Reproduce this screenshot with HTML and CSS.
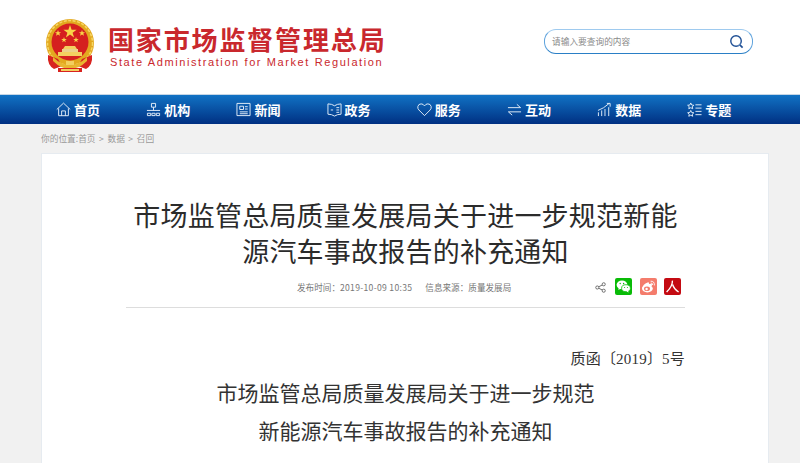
FILE: index.html
```html
<!DOCTYPE html>
<html lang="zh-CN">
<head>
  <meta charset="UTF-8" />
  <meta name="viewport" content="width=device-width, initial-scale=1.0"/>
  <title>市场监管总局质量发展局关于进一步规范新能源汽车事故报告的补充通知</title>
  <link rel="stylesheet" href="styles.css">
</head>
<body>

  <!-- Header -->
  <header class="header">
    <div class="logo">
      <svg class="emblem" viewBox="0 0 52 54" width="52" height="54">
        <circle cx="26" cy="24" r="24" fill="#e3a81f"/>
        <circle cx="26" cy="24" r="22.5" fill="none" stroke="#f6d765" stroke-width="1.5" stroke-dasharray="3 1.5"/>
        <circle cx="26" cy="23" r="18.5" fill="#d5201f"/>
        <path d="M4 36 Q3 46 10 50 L18 47 L14 40 Z" fill="#d8231f"/>
        <path d="M48 36 Q49 46 42 50 L34 47 L38 40 Z" fill="#d8231f"/>
        <path d="M9 38 Q17 46 26 46 Q35 46 43 38 L43 42 Q35 50 26 50 Q17 50 9 42 Z" fill="#e9b530"/>
        <path d="M14 49 H38 V53 H14 Z" fill="#d8231f"/>
        <path d="M17 50 H35 V52 H17 Z" fill="#f3cf60"/>
        <path d="M22 42 H30 V46 H22 Z" fill="#f3cf60"/>
        <polygon points="26,6 27.6,10.8 32.6,10.8 28.6,13.7 30.1,18.5 26,15.6 21.9,18.5 23.4,13.7 19.4,10.8 24.4,10.8" fill="#f8d648"/>
        <polygon points="14,11 14.8,13.2 17.1,13.2 15.3,14.6 16,16.8 14,15.5 12,16.8 12.7,14.6 10.9,13.2 13.2,13.2" fill="#f8d648"/>
        <polygon points="38,11 38.8,13.2 41.1,13.2 39.3,14.6 40,16.8 38,15.5 36,16.8 36.7,14.6 34.9,13.2 37.2,13.2" fill="#f8d648"/>
        <polygon points="20,18 20.7,20 22.8,20 21.1,21.2 21.8,23.2 20,22 18.2,23.2 18.9,21.2 17.2,20 19.3,20" fill="#f8d648"/>
        <polygon points="32,18 32.7,20 34.8,20 33.1,21.2 33.8,23.2 32,22 30.2,23.2 30.9,21.2 29.2,20 31.3,20" fill="#f8d648"/>
        <path d="M21 27 H31 L33 30 H19 Z" fill="#f3cf60"/>
        <path d="M18 30 H34 V33 H18 Z" fill="#ecd08a"/>
        <path d="M14 33 H38 V37 H14 Z" fill="#f3cf60"/>
      </svg>
      <div class="logo-text">
        <div class="logo-cn">国家市场监督管理总局</div>
        <div class="logo-en">State Administration for Market Regulation</div>
      </div>
    </div>
    <div class="search">
      <span class="search-text">请输入要查询的内容</span>
      <svg viewBox="0 0 16 16" width="15" height="15">
        <circle cx="7.5" cy="7.5" r="5.6" fill="none" stroke="#1f4f94" stroke-width="1.5"/>
        <path d="M10 13 L13 10" stroke="#9ec3ea" stroke-width="1"/>
        <path d="M11.6 11.6 L14.5 14.5" stroke="#1f4f94" stroke-width="1.8"/>
      </svg>
    </div>
  </header>

  <!-- Nav -->
  <nav class="nav">
    <a href="#">
      <svg viewBox="0 0 16 16" width="15" height="15"><path d="M.8 8 L8 1.2 L15.2 8 M2.8 6.8 V14.6 H13.2 V6.8 M6 14.6 V9.5 H10 V14.6" /></svg>
      首页
    </a>
    <a href="#">
      <svg viewBox="0 0 16 16" width="15" height="15"><path d="M5.8 1.5 H10.2 V5.5 H5.8 Z M1 9 H15 M8 5.5 V9 M1.5 12 H5 V14.5 H1.5 Z M6.3 12 H9.7 V14.5 H6.3 Z M11 12 H14.5 V14.5 H11 Z" /></svg>
      机构
    </a>
    <a href="#">
      <svg viewBox="0 0 16 16" width="15" height="15"><path d="M1 1.5 H15 V14.5 H1 Z M4 4.5 H8 V8 H4 Z M9.5 5 H12.5 M9.5 7.5 H12.5 M4 10.5 H12.5 M4 12.5 H12.5" /></svg>
      新闻
    </a>
    <a href="#">
      <svg viewBox="0 0 16 16" width="15" height="15"><path d="M1 2 Q5 2 8 4 Q11 2 15 2 V13 Q11 13 8 15 Q5 13 1 13 Z M10 6 H13 M10 8.5 H13 M10 11 H13 M4 8.5 H6.5" /></svg>
      政务
    </a>
    <a href="#">
      <svg viewBox="0 0 16 16" width="15" height="15"><path d="M8 14.5 L2 8.5 Q.5 7 .9 4.8 Q1.5 2 4.4 2 Q6.8 2 8 4.2 Q9.2 2 11.6 2 Q14.5 2 15.1 4.8 Q15.5 7 14 8.5 Z" /></svg>
      服务
    </a>
    <a href="#">
      <svg viewBox="0 0 16 16" width="15" height="15"><path d="M1 6 H14.5 L10.5 2.5 M15 10.5 H1.5 L5.5 14" /></svg>
      互动
    </a>
    <a href="#">
      <svg viewBox="0 0 16 16" width="15" height="15"><path d="M1 9 Q7 7 13 1.5 M10.5 1.5 H14 V5 M1.5 11 V15 M5 9 V15 M8.5 7.5 V15 M12.5 5.5 V15" /></svg>
      数据
    </a>
    <a href="#">
      <svg viewBox="0 0 16 16" width="15" height="15"><path d="M4 1 L5 3.2 L7.3 3.5 L5.6 5 L6.1 7.2 L4 6.1 L1.9 7.2 L2.4 5 L.7 3.5 L3 3.2 Z M4 9 L5 11.2 L7.3 11.5 L5.6 13 L6.1 15.2 L4 14.1 L1.9 15.2 L2.4 13 L.7 11.5 L3 11.2 Z M9 3 H15.5 M9 6.5 H15.5 M9 10 H15.5 M9 13.5 H15.5" /></svg>
      专题
    </a>
  </nav>

  <!-- Breadcrumb -->
  <div class="crumb">你的位置:首页 &gt; 数据 &gt; 召回</div>

  <!-- Article -->
  <main class="card">
    <h1 class="title">市场监管总局质量发展局关于进一步规范新能<br>源汽车事故报告的补充通知</h1>
    <div class="meta">
      <span>发布时间：<span class="meta-date">2019-10-09 10:35</span></span>
      <span class="meta-from">信息来源：质量发展局</span>
      <div class="share">
        <svg class="share-icon" viewBox="0 0 12 12" width="11" height="11">
          <path d="M9.5 2.5 L2.5 6 L9.5 9.5" fill="none" stroke="#666" stroke-width="1"/>
          <circle cx="9.5" cy="2.5" r="1.7" fill="#fff" stroke="#666"/>
          <circle cx="2.5" cy="6" r="1.7" fill="#fff" stroke="#666"/>
          <circle cx="9.5" cy="9.5" r="1.7" fill="#fff" stroke="#666"/>
        </svg>
        <span class="badge wechat">
          <svg viewBox="0 0 17 17" width="17" height="17">
            <ellipse cx="7" cy="6.8" rx="5.4" ry="4.4" fill="#fff"/>
            <path d="M3.8 9.5 L3.4 12 L6 10.5 Z" fill="#fff"/>
            <ellipse cx="11" cy="10.2" rx="4.4" ry="3.5" fill="#fff" stroke="#09bb07" stroke-width=".8"/>
            <path d="M13 12.8 L13.6 14.6 L11.4 13.4 Z" fill="#fff"/>
            <circle cx="5.2" cy="5.5" r=".7" fill="#09bb07"/>
            <circle cx="8.6" cy="5.5" r=".7" fill="#09bb07"/>
            <circle cx="9.6" cy="9.5" r=".55" fill="#09bb07"/>
            <circle cx="12.4" cy="9.5" r=".55" fill="#09bb07"/>
          </svg>
        </span>
        <span class="badge weibo">
          <svg viewBox="0 0 17 17" width="17" height="17">
            <ellipse cx="7.4" cy="10.6" rx="5.4" ry="3.8" fill="#fff"/>
            <path d="M2 10.5 Q3 6 7.6 4.4 Q9.4 4 9 6 Q11.6 5.2 12 6.6 Q12 7.6 11.6 8.2" fill="#fff"/>
            <ellipse cx="7" cy="10.8" rx="3" ry="2.3" fill="#f47c6c"/>
            <circle cx="6.6" cy="11" r="1.2" fill="#fff"/>
            <path d="M10.6 3.2 Q14.6 3 14.4 7.4 M10.8 5 Q12.8 5 12.6 7" fill="none" stroke="#fff" stroke-width=".9"/>
          </svg>
        </span>
        <span class="badge people">
          <svg viewBox="0 0 17 17" width="17" height="17">
            <path d="M8.4 2.6 Q8.8 8 2.6 14 M8.6 6.5 Q10 11 14.6 14" fill="none" stroke="#fff" stroke-width="1.4"/>
          </svg>
        </span>
      </div>
    </div>
    <div class="article">
      <p class="doc-no">质函〔2019〕5号</p>
      <h2 class="doc-title">市场监管总局质量发展局关于进一步规范<br>新能源汽车事故报告的补充通知</h2>
    </div>
  </main>

</body>
</html>
```

FILE: styles.css
```css
html, body {
  margin: 0;
  padding: 0;
  height: 100%;
  overflow: hidden;
  font-family: "Noto Sans CJK SC", "Noto Sans", sans-serif;
  background: #f1f1f1;
}

.header {
  height: 94px;
  background: #fff;
  display: flex;
  align-items: flex-start;
  justify-content: space-between;
  padding: 0 47px 0 44px;
}

.logo {
  display: flex;
  gap: 12px;
  padding-top: 19px;
}

.logo-cn {
  font-size: 26px;
  line-height: 30px;
  font-weight: 700;
  letter-spacing: 1.85px;
  color: #c9282d;
  margin-top: 5px;
  white-space: nowrap;
}

.logo-en {
  font-family: "Liberation Sans", sans-serif;
  font-size: 11px;
  line-height: 14px;
  letter-spacing: 1.6px;
  color: #c9282d;
  margin: 1px 0 0 2px;
  white-space: nowrap;
}

.search {
  width: 192px;
  height: 23px;
  margin-top: 29px;
  border: 1px solid #5fa3dd;
  border-top-color: #9ecaef;
  border-bottom-color: #2a7fc6;
  border-radius: 12px;
  display: flex;
  align-items: center;
  justify-content: space-between;
  padding: 0 8px 0 7px;
}

.search-text {
  font-size: 8.7px;
  color: #8a8a8a;
}

.nav {
  height: 30px;
  border-top: 1px solid #c5d6e6;
  background: linear-gradient(#1172c4, #003082);
  display: flex;
  align-items: center;
  padding: 0 0 1px 56px;
  box-sizing: border-box;
}

.nav a {
  width: 90.2px;
  flex: none;
  display: flex;
  align-items: center;
  gap: 3px;
  color: #fff;
  font-size: 13px;
  font-weight: 700;
  text-decoration: none;
}

.nav svg {
  fill: none;
  stroke: #e6f0fa;
  stroke-width: 1;
}

.crumb {
  height: 29px;
  line-height: 30px;
  padding-left: 41px;
  font-size: 8.7px;
  word-spacing: 1.6px;
  color: #999;
}

.card {
  margin: 0 31px 0 41px;
  height: 400px;
  background: #fff;
  border: 1px solid #e6ebf0;
  border-bottom: none;
  box-sizing: border-box;
  padding: 43px 83px 0 84px;
}

.title {
  margin: 0;
  font-size: 27px;
  line-height: 36px;
  font-weight: 400;
  letter-spacing: .22px;
  text-align: center;
  color: #2b2b2b;
  white-space: nowrap;
}

.meta {
  display: flex;
  align-items: center;
  height: 39px;
  box-sizing: border-box;
  padding: 0 4px 2px 171px;
  border-bottom: 1px solid #ddd;
  font-size: 8.6px;
  color: #777;
}

.meta-date {
  letter-spacing: .3px;
}

.meta-from {
  margin-left: 13px;
}

.share {
  margin: -2px 0 0 auto;
  display: flex;
  align-items: center;
  gap: 7.5px;
}

.share-icon {
  margin: 2px 2px 0 0;
}

.badge {
  width: 17px;
  height: 17px;
  border-radius: 2px;
  display: block;
}

.badge svg {
  display: block;
}

.wechat { background: #09bb07; }
.weibo { background: #f47c6c; }
.people { background: #c40a12; }

.doc-no {
  margin: 40px 0 0;
  font-family: "Liberation Serif", "Noto Sans CJK SC", serif;
  font-size: 15px;
  line-height: 22px;
  letter-spacing: .2px;
  text-align: right;
  color: #333;
}

.doc-title {
  margin: 3px 0 0;
  font-size: 21px;
  line-height: 38px;
  font-weight: 400;
  text-align: center;
  color: #333;
}
```
